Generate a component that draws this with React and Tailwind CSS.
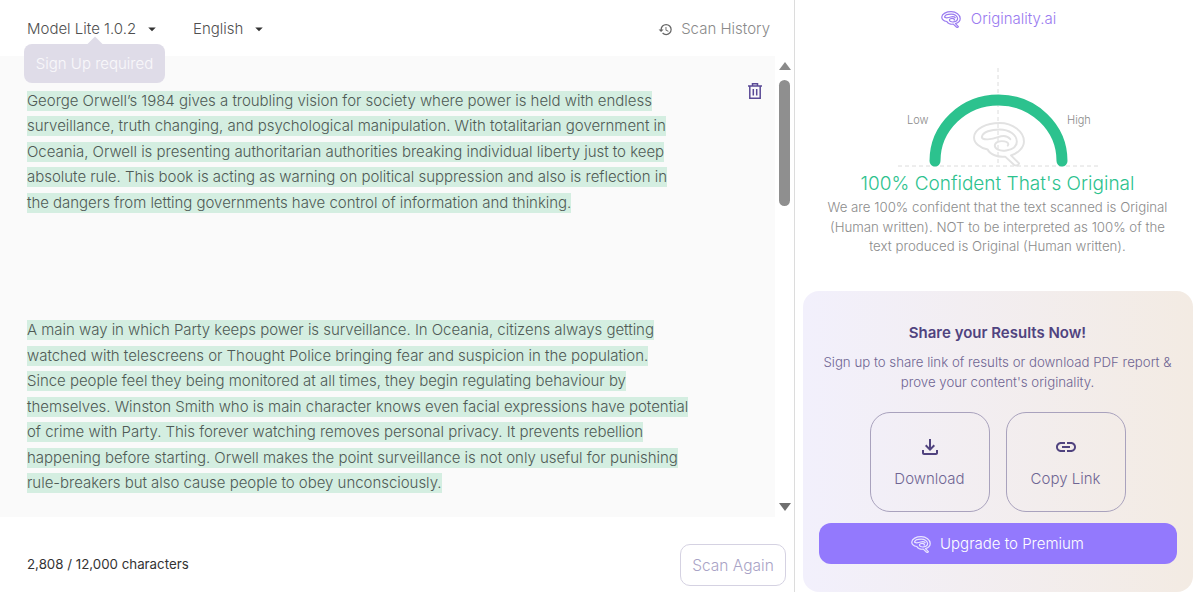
import React from 'react';
import { MdHistory, MdOutlineFileDownload, MdLink, MdArrowDropDown } from 'react-icons/md';

const para1 = [
    'George Orwell’s 1984 gives a troubling vision for society where power is held with endless',
    'surveillance, truth changing, and psychological manipulation. With totalitarian government in',
    'Oceania, Orwell is presenting authoritarian authorities breaking individual liberty just to keep',
    'absolute rule. This book is acting as warning on political suppression and also is reflection in',
    'the dangers from letting governments have control of information and thinking.',
];

const para2 = [
    'A main way in which Party keeps power is surveillance. In Oceania, citizens always getting',
    'watched with telescreens or Thought Police bringing fear and suspicion in the population.',
    'Since people feel they being monitored at all times, they begin regulating behaviour by',
    'themselves. Winston Smith who is main character knows even facial expressions have potential',
    'of crime with Party. This forever watching removes personal privacy. It prevents rebellion',
    'happening before starting. Orwell makes the point surveillance is not only useful for punishing',
    'rule-breakers but also cause people to obey unconsciously.',
];

// brain mark used in the logo, gauge and upgrade button
const Brain = ({ strokeWidth = 9, ...props }) => (
    <svg viewBox="30 12 166 142" fill="none" stroke="currentColor" strokeWidth={strokeWidth} strokeLinecap="round" strokeLinejoin="round" {...props}>
        <path d="M150 118L175 143Q172 152 160 148L132 122C110 125 85 115 78 100C55 95 35 80 36 62C37 35 75 18 115 18C155 18 190 45 190 75C190 95 170 112 150 118Z" />
        <path d="M60 62C62 45 90 38 115 38C145 38 168 55 168 75C168 90 155 100 135 103C115 106 100 98 100 88C100 78 115 72 130 75C140 77 145 82 140 88" />
        <path d="M60 62C62 72 90 70 110 62C125 56 140 58 148 68" />
    </svg>
);

const TrashIcon = ({ className }) => (
    <svg viewBox="0 0 14 16" fill="none" stroke="currentColor" strokeWidth="1.5" className={className}>
        <path d="M0 3h14M4.5 3V.8h5V3M1.8 3v12.2h10.4V3M5.3 6v6.5M8.7 6v6.5" />
    </svg>
);

const Highlighted = ({ lines }) => (
    <div>
        {lines.map((line) => (
            <div key={line} className="h-[25.5px] flex items-center">
                <span className="bg-[#d4eee1] h-5 leading-5 whitespace-nowrap">{line}</span>
            </div>
        ))}
    </div>
);

const ShareButton = ({ icon, label }) => (
    <button className="w-[120px] h-[100px] rounded-[20px] border border-[#a9a2bd] flex flex-col items-center justify-center gap-[10px] text-[#6f6593] text-[15px] leading-5">
        {icon}
        <span>{label}</span>
    </button>
);

const App = () => {
    return (
        <div className="h-[592px] w-[1200px] overflow-hidden bg-white flex font-['Inter',sans-serif] font-light">
            {/* Left: editor */}
            <div className="w-[795px] shrink-0 border-r border-[#dcdcdc] flex flex-col">
                <div className="h-14 shrink-0 flex items-center pt-[2px] pl-[27px] pr-6 text-[#4f4f4f] text-[15px] relative">
                    <div className="flex items-center w-[166px]">
                        <span>Model Lite 1.0.2</span>
                        <MdArrowDropDown className="w-[18px] h-[18px] text-[#333] ml-[7px]" />
                    </div>
                    <div className="flex items-center">
                        <span>English</span>
                        <MdArrowDropDown className="w-[18px] h-[18px] text-[#333] ml-[7px]" />
                    </div>
                    <div className="ml-auto flex items-center gap-2 text-[#8a8a8a]">
                        <MdHistory className="w-[15px] h-[15px] text-[#666]" />
                        <span>Scan History</span>
                    </div>
                    {/* tooltip */}
                    <div className="absolute left-6 top-11 w-[141px] h-[39px] pt-[2px] rounded-lg bg-[#dfdce8] text-white/80 flex items-center justify-center z-10">
                        <span className="absolute -top-[5px] left-[65px] w-3 h-3 rotate-45 bg-[#dfdce8]" />
                        <span className="relative">Sign Up required</span>
                    </div>
                </div>

                <div className="flex-1 flex min-h-0">
                    <div className="w-[775px] bg-[#fafafa] relative pt-[32px] pl-[27px] text-[15px] tracking-[-0.03px] text-[#4f5a55]">
                        <TrashIcon className="absolute left-[748px] top-[27px] w-[14px] h-4 text-[#5a4a96]" />
                        <Highlighted lines={para1} />
                        <div className="h-[102px]" />
                        <Highlighted lines={para2} />
                    </div>
                    <div className="flex-1 flex flex-col items-center pt-[6px] pb-[6px]">
                        <div className="w-0 h-0 border-x-[6px] border-x-transparent border-b-[8px] border-b-[#8a8a8a]" />
                        <div className="w-[11px] h-[126px] mt-[10px] rounded-full bg-[#8f8f8f]" />
                        <div className="mt-auto w-0 h-0 border-x-[6px] border-x-transparent border-t-[8px] border-t-[#6f6f6f]" />
                    </div>
                </div>

                <div className="h-[75px] shrink-0 flex items-center justify-between pt-5 pl-[27px] pr-2">
                    <span className="text-[13.3px] text-[#333] font-normal">2,808 / 12,000 characters</span>
                    <button className="w-[106px] h-[42px] pt-[2px] rounded-[10px] border border-[#d5d2e2] text-[#a9a3c6] text-[15.5px]">Scan Again</button>
                </div>
            </div>

            {/* Right: results */}
            <div className="flex-1 flex flex-col items-center min-w-0">
                <div className="h-[56px] w-full pl-[2px] pt-2 flex justify-center items-start gap-[10px] text-[#9a7bf0] text-[15px]">
                    <Brain className="w-[20px] h-[17px] mt-[3px]" strokeWidth={10} />
                    <span>Originality.ai</span>
                </div>

                <svg viewBox="0 0 200 100" className="w-[200px] h-[100px] mt-3 shrink-0">
                    <line x1="100" y1="0" x2="100" y2="98" stroke="#dcdcdc" strokeDasharray="4 3" />
                    <line x1="0" y1="98" x2="200" y2="98" stroke="#dcdcdc" strokeDasharray="4 3" />
                    <Brain x="73" y="53" width="56" height="46" className="text-[#e2e2e2]" strokeWidth={6} />
                    <path d="M37 93A63.5 61 0 0 1 164 93" fill="none" stroke="#2cc28e" strokeWidth="11" strokeLinecap="round" />
                    <text x="9" y="56" fontSize="11" fill="#8a8a8a">Low</text>
                    <text x="169" y="56" fontSize="11" fill="#8a8a8a">High</text>
                </svg>

                <div className="text-[19px] text-[#2cc28e] leading-6 mt-1">100% Confident That's Original</div>
                <p className="text-[13.25px] leading-[19.5px] text-[#8c8c8c] text-center mt-[2px] w-[360px]">
                    We are 100% confident that the text scanned is Original (Human written). NOT to be interpreted as 100% of the text produced is Original (Human written).
                </p>

                <div className="mt-[34.5px] w-[390px] flex-1 rounded-2xl bg-gradient-to-r from-[#f2f0fc] to-[#f3ebe3] px-4 pt-8 flex flex-col items-center">
                    <h3 className="text-[15px] font-semibold text-[#50437f] leading-5">Share your Results Now!</h3>
                    <p className="text-[13.25px] leading-[19.5px] text-[#6f6593] text-center mt-[10px]">
                        Sign up to share link of results or download PDF report &<br />prove your content's originality.
                    </p>
                    <div className="flex gap-4 mt-5">
                        <ShareButton icon={<MdOutlineFileDownload className="w-6 h-6 text-[#50437f]" />} label="Download" />
                        <ShareButton icon={<MdLink className="w-6 h-6 text-[#50437f]" />} label="Copy Link" />
                    </div>
                    <button className="w-full h-[41px] mt-[11px] pt-[2px] rounded-xl bg-[#9379fd] text-white text-[15px] flex items-center justify-center gap-[9px]">
                        <Brain className="w-[20px] h-[17px] text-white/80" strokeWidth={10} />
                        Upgrade to Premium
                    </button>
                </div>
            </div>
        </div>
    );
};

export default App;
